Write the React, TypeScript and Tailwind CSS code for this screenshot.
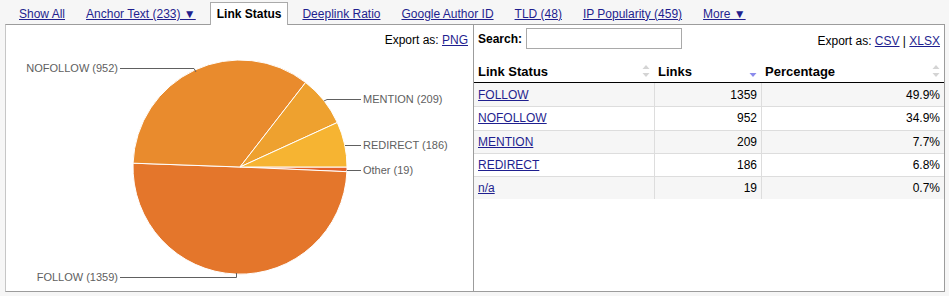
import React from "react";

const LINK = "text-[#1f1f8f] underline";

const tabs = [
  { label: "Show All" },
  { label: "Anchor Text (233) ▼" },
  { label: "Link Status", active: true },
  { label: "Deeplink Ratio" },
  { label: "Google Author ID" },
  { label: "TLD (48)" },
  { label: "IP Popularity (459)" },
  { label: "More ▼" },
];

const rows = [
  { status: "FOLLOW", links: 1359, pct: "49.9%" },
  { status: "NOFOLLOW", links: 952, pct: "34.9%" },
  { status: "MENTION", links: 209, pct: "7.7%" },
  { status: "REDIRECT", links: 186, pct: "6.8%" },
  { status: "n/a", links: 19, pct: "0.7%" },
];

// pie slices, clockwise from 3 o'clock
const slices = [
  { name: "Other", value: 19, color: "#e3602a" },
  { name: "FOLLOW", value: 1359, color: "#e4762b" },
  { name: "NOFOLLOW", value: 952, color: "#e98b2d" },
  { name: "MENTION", value: 209, color: "#eea12f" },
  { name: "REDIRECT", value: 186, color: "#f6b432" },
];

const cx = 234;
const cy = 119;
const r = 107;

function point(a: number) {
  const rad = (a * Math.PI) / 180;
  return [cx + r * Math.cos(rad), cy + r * Math.sin(rad)];
}

function arc(a0: number, a1: number) {
  const [x0, y0] = point(a0);
  const [x1, y1] = point(a1);
  const large = a1 - a0 > 180 ? 1 : 0;
  return `M${cx} ${cy} L${x0.toFixed(2)} ${y0.toFixed(2)} A${r} ${r} 0 ${large} 1 ${x1.toFixed(2)} ${y1.toFixed(2)} Z`;
}

function PieChart() {
  const total = slices.reduce((s, x) => s + x.value, 0);
  let start = 0;
  const paths = slices.map((s) => {
    const end = start + (s.value / total) * 360;
    const d = arc(start, end);
    start = end;
    return <path key={s.name} d={d} fill={s.color} stroke="#fff" strokeWidth={1} strokeLinejoin="round" />;
  });

  return (
    <svg width={468} height={243} className="block">
      {paths}
      <g stroke="#606060" strokeWidth={1} fill="none">
        <path d="M114 20.5 L188 20.5 L190 24" />
        <path d="M318 53 L321 51.5 L355 51.5" />
        <path d="M339 97.5 L355 97.5" />
        <path d="M341 122.5 L355 122.5" />
        <path d="M114 229.5 L230.5 229.5 L230.5 225" />
      </g>
      <g fill="#606060" fontSize={11} fontFamily="'Liberation Sans', Arial, sans-serif">
        <text x={112} y={24} textAnchor="end">NOFOLLOW (952)</text>
        <text x={357} y={55}>MENTION (209)</text>
        <text x={357} y={101}>REDIRECT (186)</text>
        <text x={357} y={126}>Other (19)</text>
        <text x={112} y={233} textAnchor="end">FOLLOW (1359)</text>
      </g>
    </svg>
  );
}

function SortIcon({ active }: { active?: boolean }) {
  return (
    <svg width={8} height={14} className="block shrink-0">
      {!active && <path d="M0.5 5 L4 1 L7.5 5 Z" fill="#d4d4d4" />}
      <path d="M0.5 9 L4 13 L7.5 9 Z" fill={active ? "#8b8bec" : "#d4d4d4"} />
    </svg>
  );
}

export default function App() {
  return (
    <div className="w-[949px] h-[296px] bg-[#f6f6f6] font-['Liberation_Sans',Arial,sans-serif] text-[12px] leading-[14px] text-black">
      {/* tabs */}
      <div className="flex items-end h-[24px] pl-[12px] gap-[7px]">
        {tabs.map((t) =>
          t.active ? (
            <div
              key={t.label}
              className="relative z-10 -mb-px h-[23px] flex items-center px-[6px] bg-white border border-b-0 border-[#aaaaaa] font-bold"
            >
              {t.label}
            </div>
          ) : (
            <div key={t.label} className="h-[23px] -mb-px flex items-center px-[6px] border border-transparent">
              <span className={LINK}>{t.label}</span>
            </div>
          )
        )}
      </div>

      {/* panel */}
      <div className="ml-[5px] w-[940px] h-[268px] bg-white border border-[#9c9c9c] border-l-[#c6c6c6] flex">
        {/* chart */}
        <div className="w-[468px] border-r border-[#9c9c9c] flex flex-col">
          <div className="h-[23px] pt-[8px] pr-[5px] text-right">
            Export as: <span className={LINK}>PNG</span>
          </div>
          <PieChart />
        </div>

        {/* table */}
        <div className="flex-1 pt-[3px] flex flex-col">
          <div className="flex items-center justify-between h-[21px] pl-[4px] pr-[4px]">
            <div className="flex items-center">
              <span className="font-bold">Search:</span>
              <div className="ml-[4px] w-[156px] h-[21px] border border-[#a9a9a9] bg-white" />
            </div>
            <div className="pt-[4px]">
              Export as: <span className={LINK}>CSV</span> | <span className={LINK}>XLSX</span>
            </div>
          </div>

          <div className="mt-[11px]">
            <div className="grid grid-cols-[180px_107px_1fr] h-[23px] border-b border-black font-bold text-[13px] leading-[15px]">
              <div className="flex items-center justify-between px-[4px]">
                <span>Link Status</span>
                <SortIcon />
              </div>
              <div className="flex items-center justify-between px-[4px]">
                <span>Links</span>
                <SortIcon active />
              </div>
              <div className="flex items-center justify-between px-[4px]">
                <span>Percentage</span>
                <SortIcon />
              </div>
            </div>
            {rows.map((row, i) => (
              <div
                key={row.status}
                className={`grid grid-cols-[180px_107px_1fr] h-[23.3px] ${i % 2 === 0 ? "bg-[#f6f6f6]" : "bg-white"} ${i > 0 ? "border-t border-[#dddddd]" : ""}`}
              >
                <div className="flex items-center px-[4px]">
                  <span className={LINK}>{row.status}</span>
                </div>
                <div className="flex items-center justify-end px-[4px] border-l border-[#dddddd]">{row.links}</div>
                <div className="flex items-center justify-end px-[4px] border-l border-[#dddddd]">{row.pct}</div>
              </div>
            ))}
          </div>
        </div>
      </div>
    </div>
  );
}
